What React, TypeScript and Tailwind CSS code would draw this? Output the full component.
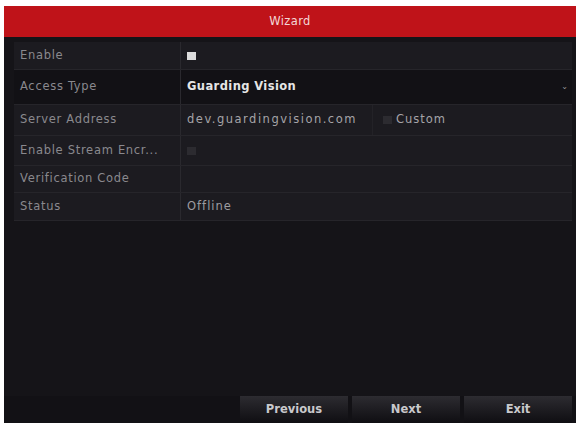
import React from 'react';

const font = { fontFamily: '"DejaVu Sans", Verdana, sans-serif' };

interface RowProps {
  label: string;
  height: string;
  dark?: boolean;
  children?: React.ReactNode;
}

const Row: React.FC<RowProps> = ({ label, height, dark = false, children }) => (
  <div className={`flex ${height} border-b border-[#26252a] ${dark ? 'bg-[#121115]' : 'bg-[#1c1b20]'}`}>
    <div className="w-[167px] flex items-center pl-[6px] text-[11.5px] tracking-[0.7px] text-[#8a898e] border-r border-[#2a292e] whitespace-nowrap overflow-hidden">
      {label}
    </div>
    <div className="flex-1 flex items-center pl-[6px]">{children}</div>
  </div>
);

const Box: React.FC<{ dim?: boolean }> = ({ dim = false }) => (
  <span className={`inline-block w-[9px] h-[8px] ${dim ? 'bg-[#2c2b30]' : 'bg-[#dcdcdc]'}`} />
);

export default function App() {
  return (
    <div className="w-[576px] h-[423px] bg-white pt-[6px] pl-[4px]" style={font}>
      <div className="h-full flex flex-col bg-[#151418]">
        <div className="h-[31px] bg-[#bf1319] flex items-center justify-center text-[11.5px] tracking-[0.4px] text-[#f3d6d6]">
          Wizard
        </div>

        <div className="flex-1 px-[10px] pt-[5px] pr-[4px]">
          <Row label="Enable" height="h-[28px]">
            <Box />
          </Row>
          <Row label="Access Type" height="h-[35px]" dark>
            <div className="flex-1 flex items-center justify-between pr-[4px]">
              <span className="text-[11.5px] font-bold tracking-[0.4px] text-[#e6e6e6]">Guarding Vision</span>
              <span className="text-[8px] text-[#9a9a9a]">&#8964;</span>
            </div>
          </Row>
          <Row label="Server Address" height="h-[31px]">
            <span className="w-[185px] text-[11.5px] tracking-[1.5px] text-[#a5a4a8]">dev.guardingvision.com</span>
            <div className="h-full flex items-center gap-[4px] pl-[10px] border-l border-[#232227]">
              <Box dim />
              <span className="text-[11.5px] tracking-[1px] text-[#a5a4a8]">Custom</span>
            </div>
          </Row>
          <Row label="Enable Stream Encr..." height="h-[30px]">
            <Box dim />
          </Row>
          <Row label="Verification Code" height="h-[27px]" />
          <Row label="Status" height="h-[28px]">
            <span className="text-[11.5px] tracking-[1px] text-[#9d9ca0]">Offline</span>
          </Row>
        </div>

        <div className="h-[27px] flex justify-end gap-[4px] pr-[4px] bg-[#121115]">
          {['Previous', 'Next', 'Exit'].map((b) => (
            <button
              key={b}
              className="w-[108px] h-full bg-gradient-to-b from-[#2d2c31] to-[#0f0e12] text-[11.5px] font-bold text-[#c9c9cc]"
            >
              {b}
            </button>
          ))}
        </div>
      </div>
    </div>
  );
}
